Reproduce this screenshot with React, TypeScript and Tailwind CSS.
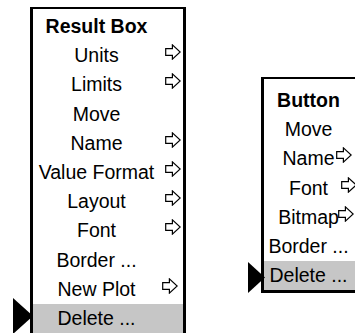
import React from "react";

type Item = { label: string; arrow?: number; bold?: boolean; selected?: boolean };

const resultItems: Item[] = [
  { label: "Result Box", bold: true },
  { label: "Units", arrow: 132 },
  { label: "Limits", arrow: 132 },
  { label: "Move" },
  { label: "Name", arrow: 132 },
  { label: "Value Format", arrow: 132 },
  { label: "Layout", arrow: 132 },
  { label: "Font", arrow: 132 },
  { label: "Border ..." },
  { label: "New Plot", arrow: 129 },
  { label: "Delete ...", selected: true },
];

const buttonItems: Item[] = [
  { label: "Button", bold: true },
  { label: "Move" },
  { label: "Name", arrow: 72 },
  { label: "Font", arrow: 77 },
  { label: "Bitmap", arrow: 74 },
  { label: "Border ..." },
  { label: "Delete ...", selected: true },
];

const OutlineArrow = ({ left }: { left: number }) => (
  <svg
    className="absolute top-[3px] h-[16px] w-[16px]"
    style={{ left }}
    viewBox="0 0 16 16"
  >
    <path
      d="M0.7 4.6 H7.4 V0.9 L15.2 8 L7.4 15.1 V11.4 H0.7 Z"
      fill="white"
      stroke="black"
      strokeWidth="1.2"
      strokeLinejoin="miter"
    />
  </svg>
);

const Pointer = ({ className }: { className: string }) => (
  <svg className={`absolute z-10 ${className}`} viewBox="0 0 20 36" preserveAspectRatio="none">
    <polygon points="0,0 20,18 0,36" fill="black" />
  </svg>
);

const MenuBox = ({
  items,
  textWidth,
  className,
  pointerClass,
}: {
  items: Item[];
  textWidth: number;
  className: string;
  pointerClass: string;
}) => (
  <div className={`border-black bg-white ${className}`}>
    {items.map((item) => (
      <div
        key={item.label}
        className={`relative flex h-[29.2px] items-center leading-[29.2px] ${
          item.selected ? "bg-[#c6c6c6]" : ""
        }`}
      >
        <span
          className={`whitespace-nowrap text-center ${item.bold ? "font-bold" : ""}`}
          style={{ width: textWidth }}
        >
          {item.label}
        </span>
        {item.arrow !== undefined && <OutlineArrow left={item.arrow} />}
        {item.selected && <Pointer className={pointerClass} />}
      </div>
    ))}
  </div>
);

export default function App() {
  return (
    <div className="h-[333px] w-[355px] overflow-hidden bg-white font-['Liberation_Sans',Arial,sans-serif] text-[19.5px] text-black">
      <div className="flex w-[500px] items-start pl-[30px] pt-[7px]">
        <MenuBox
          items={resultItems}
          textWidth={127}
          className="w-[156px] shrink-0 border-b-[3px] border-l-[3px] border-r-[3px] border-t-2 pt-[3px]"
          pointerClass="-left-[20px] -top-[6px] h-[36px] w-[20px]"
        />
        <MenuBox
          items={buttonItems}
          textWidth={89}
          className="ml-[75px] mt-[70px] w-[120px] shrink-0 border-b-[3px] border-l-[3px] border-r-[3px] border-t-2 pt-[7px]"
          pointerClass="-left-[16px] top-[1px] h-[31px] w-[17px]"
        />
      </div>
    </div>
  );
}
